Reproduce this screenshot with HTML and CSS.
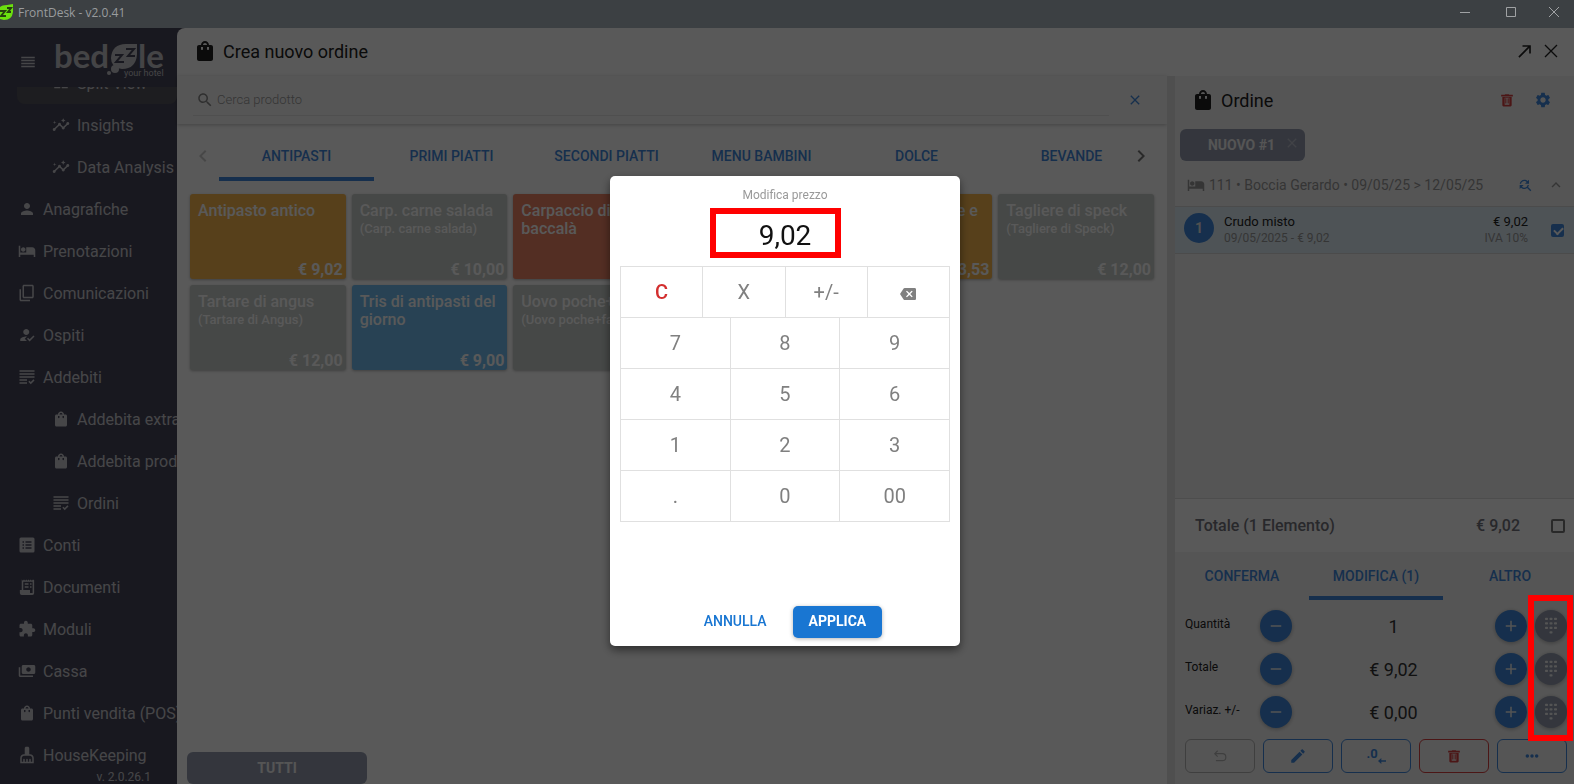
FILE: index.html
```html
<!DOCTYPE html>
<html lang="it">
  <head>
    <meta charset="utf-8">
    <title>FrontDesk</title>
    <link rel="stylesheet" href="styles.css">
  </head>
  <body>
    <!-- icon set -->
    <svg class="sprite" width="0" height="0">
      <symbol id="i-reorder" viewBox="0 0 24 24"><path d="M3 15h18v-2H3v2zm0 4h18v-2H3v2zm0-8h18V9H3v2zm0-6v2h18V5H3z"/></symbol>
      <symbol id="i-insights" viewBox="0 0 24 24"><path d="M21 8c-1.45 0-2.26 1.44-1.93 2.51l-3.55 3.56c-.3-.09-.74-.09-1.04 0l-2.55-2.55C12.27 10.45 11.46 9 10 9c-1.45 0-2.27 1.44-1.93 2.52l-4.56 4.55C2.44 15.74 1 16.55 1 18c0 1.1.9 2 2 2 1.45 0 2.26-1.44 1.93-2.51l4.55-4.56c.3.09.74.09 1.04 0l2.55 2.55C12.73 16.55 13.54 18 15 18c1.45 0 2.27-1.44 1.93-2.52l3.56-3.55C21.56 12.26 23 11.45 23 10c0-1.1-.9-2-2-2zM15 9l.94-2.07L18 6l-2.06-.93L15 3l-.92 2.07L12 6l2.08.93zM3.5 11L4 9l2-.5L4 8l-.5-2L3 8l-2 .5L3 9z"/></symbol>
      <symbol id="i-split" viewBox="0 0 24 24"><path d="M3 5h8v14H3zM13 5h8v5h-8zM13 12h8v7h-8z"/></symbol>
      <symbol id="i-person" viewBox="0 0 24 24"><path d="M12 12c2.21 0 4-1.79 4-4s-1.79-4-4-4-4 1.79-4 4 1.79 4 4 4zm0 2c-2.67 0-8 1.34-8 4v2h16v-2c0-2.66-5.33-4-8-4z"/></symbol>
      <symbol id="i-hotel" viewBox="0 0 24 24"><path d="M7 13c1.66 0 3-1.34 3-3S8.66 7 7 7s-3 1.34-3 3 1.34 3 3 3zm12-6h-8v7H3V5H1v15h2v-3h18v3h2v-9c0-2.21-1.79-4-4-4z"/></symbol>
      <symbol id="i-copy" viewBox="0 0 24 24"><path transform="matrix(1 0 0 -1 0 24)" d="M16 1H4c-1.1 0-2 .9-2 2v14h2V3h12V1zm3 4H8c-1.1 0-2 .9-2 2v14c0 1.1.9 2 2 2h11c1.1 0 2-.9 2-2V7c0-1.1-.9-2-2-2zm0 16H8V7h11v14z"/></symbol>
      <symbol id="i-guest" viewBox="0 0 24 24"><path d="M9 17l3-2.94c-.39-.04-.68-.06-1-.06-2.67 0-8 1.34-8 4v2h9l-3-3zm2-5c2.21 0 4-1.79 4-4s-1.79-4-4-4-4 1.79-4 4 1.79 4 4 4zM15.47 20.5L12 17l1.4-1.41 2.07 2.08 5.13-5.17 1.4 1.41z"/></symbol>
      <symbol id="i-charges" viewBox="0 0 24 24"><path d="M2 3h20v2H2zM2 7h20v2H2zM2 11h20v2H2zM2 15h10v2H2zM2 19h10v2H2zM17 21.500l-3.200-3.200 1.400-1.400 1.800 1.800 3.600-3.600 1.400 1.400z"/></symbol>
      <symbol id="i-bag" viewBox="0 0 24 24"><path d="M18 6h-2c0-2.210-1.790-4-4-4S8 3.790 8 6H6c-1.100 0-2 .9-2 2v12c0 1.100.9 2 2 2h12c1.100 0 2-.9 2-2V8c0-1.100-.9-2-2-2zm-8 4c0 .55-.45 1-1 1s-1-.45-1-1V8h2v2zm2-6c1.100 0 2 .9 2 2h-4c0-1.100.9-2 2-2zm4 6c0 .55-.45 1-1 1s-1-.45-1-1V8h2v2z"/></symbol>
      <symbol id="i-list" viewBox="0 0 24 24"><path fill-rule="evenodd" d="M4 2h16a2 2 0 0 1 2 2v16a2 2 0 0 1-2 2H4a2 2 0 0 1-2-2V4a2 2 0 0 1 2-2zM6 7v2h2V7zM10 7v2h8V7zM6 11v2h2v-2zM10 11v2h8v-2zM6 15v2h2v-2zM10 15v2h8v-2z"/></symbol>
      <symbol id="i-receipt" viewBox="0 0 24 24"><path fill-rule="evenodd" d="M5 2l1.500 1.500L8 2l1.500 1.500L11 2l1.500 1.500L14 2l1.500 1.500L17 2l1.500 1.500L20 2l1.500 1V20a2.500 2.500 0 0 1-2.500 2.500H5A2.500 2.500 0 0 1 2.500 20v-4H5zM7 5v11h9v4h3.500V5zM9 7h5v2H9zM16 7h2v2h-2zM9 11h5v2H9zM16 11h2v2h-2z"/></symbol>
      <symbol id="i-module" viewBox="0 0 24 24"><path d="M20.500 11H19V7c0-1.100-.9-2-2-2h-4V3.500C13 2.120 11.880 1 10.500 1S8 2.120 8 3.500V5H4c-1.100 0-1.990.9-1.990 2v3.800H3.500c1.490 0 2.700 1.210 2.700 2.700s-1.210 2.700-2.700 2.700H2V20c0 1.100.9 2 2 2h3.800v-1.500c0-1.490 1.210-2.700 2.700-2.700 1.490 0 2.700 1.210 2.700 2.700V22H17c1.100 0 2-.9 2-2v-4h1.500c1.380 0 2.500-1.120 2.500-2.500S21.880 11 20.500 11z"/></symbol>
      <symbol id="i-cash" viewBox="0 0 24 24"><path transform="matrix(-1 0 0 1 24 0)" d="M19 14V6c0-1.100-.9-2-2-2H3c-1.100 0-2 .9-2 2v8c0 1.100.9 2 2 2h14c1.100 0 2-.9 2-2zm-9-1c-1.660 0-3-1.340-3-3s1.340-3 3-3 3 1.340 3 3-1.340 3-3 3zm13-6v11c0 1.100-.9 2-2 2H4v-2h17V7h2z"/></symbol>
      <symbol id="i-clean" viewBox="0 0 24 24"><path d="M16 11h-1V3c0-1.100-.9-2-2-2h-2c-1.100 0-2 .9-2 2v8H8c-2.760 0-5 2.240-5 5v7h18v-7c0-2.760-2.240-5-5-5zm3 10h-2v-3c0-.55-.45-1-1-1s-1 .45-1 1v3h-2v-3c0-.55-.45-1-1-1s-1 .45-1 1v3H9v-3c0-.55-.45-1-1-1s-1 .45-1 1v3H5v-5c0-1.650 1.350-3 3-3h8c1.650 0 3 1.350 3 3v5z"/></symbol>
      <symbol id="i-search" viewBox="0 0 24 24"><path d="M15.500 14h-.79l-.28-.27C15.410 12.590 16 11.110 16 9.500 16 5.910 13.090 3 9.500 3S3 5.910 3 9.500 5.910 16 9.500 16c1.610 0 3.090-.59 4.230-1.570l.27.28v.79l5 4.990L20.490 19l-4.990-5zm-6 0C7.010 14 5 11.990 5 9.500S7.010 5 9.500 5 14 7.010 14 9.500 11.990 14 9.500 14z"/></symbol>
      <symbol id="i-close" viewBox="0 0 24 24"><path d="M19 6.410L17.590 5 12 10.590 6.410 5 5 6.410 10.590 12 5 17.590 6.410 19 12 13.410 17.590 19 19 17.590 13.410 12z"/></symbol>
      <symbol id="i-thin-close" viewBox="0 0 24 24"><path d="M3 3l18 18M21 3L3 21" fill="none" stroke="currentColor" stroke-width="2"/></symbol>
      <symbol id="i-popout" viewBox="0 0 24 24"><path d="M9 5v2h6.590L4 18.590 5.410 20 17 8.410V15h2V5z"/></symbol>
      <symbol id="i-trash" viewBox="0 0 24 24"><path fill-rule="evenodd" d="M2 3h6l1-1h6l1 1h6v3H2zM4 7h16v14a2 2 0 0 1-2 2H6a2 2 0 0 1-2-2zM8 8v12h8V8zM9 9h2v9H9zM13 9h2v9h-2z"/></symbol>
      <symbol id="i-gear" viewBox="0 0 24 24"><path d="M19.140 12.940c.04-.3.06-.61.06-.94 0-.32-.02-.64-.07-.94l2.030-1.580c.18-.14.23-.41.12-.61l-1.920-3.320c-.12-.22-.37-.29-.59-.22l-2.390.96c-.5-.38-1.030-.7-1.620-.94l-.36-2.540c-.04-.24-.24-.41-.48-.41h-3.840c-.24 0-.43.17-.47.41l-.36 2.540c-.59.24-1.130.57-1.620.94l-2.390-.96c-.22-.08-.47 0-.59.22L2.740 8.870c-.12.21-.08.47.12.61l2.030 1.580c-.05.3-.09.63-.09.94s.02.64.07.94l-2.030 1.580c-.18.14-.23.41-.12.61l1.920 3.320c.12.22.37.29.59.22l2.390-.96c.5.38 1.030.7 1.620.94l.36 2.540c.05.24.24.41.48.41h3.840c.24 0 .44-.17.47-.41l.36-2.540c.59-.24 1.130-.56 1.620-.94l2.390.96c.22.08.47 0 .59-.22l1.920-3.320c.12-.22.07-.47-.12-.61l-2.010-1.580zM12 15.600c-1.980 0-3.600-1.620-3.600-3.600s1.620-3.600 3.600-3.600 3.600 1.620 3.600 3.600-1.620 3.600-3.600 3.600z"/></symbol>
      <symbol id="i-left" viewBox="0 0 24 24"><path d="M15.410 7.410L14 6l-6 6 6 6 1.410-1.410L10.830 12z"/></symbol>
      <symbol id="i-right" viewBox="0 0 24 24"><path d="M10 6L8.590 7.410 13.170 12l-4.580 4.590L10 18l6-6z"/></symbol>
      <symbol id="i-up" viewBox="0 0 24 24"><path d="M12 8l-6 6 1.410 1.410L12 10.830l4.590 4.580L18 14z"/></symbol>
      <symbol id="i-replace" viewBox="0 0 24 24"><path d="M11 6c1.380 0 2.630.56 3.540 1.460L12 10h6V4l-2.050 2.050C14.680 4.780 12.930 4 11 4c-3.530 0-6.430 2.610-6.920 6H6.100c.46-2.280 2.480-4 4.900-4zm5.640 9.140c.66-.9 1.120-1.970 1.280-3.140H15.900c-.46 2.280-2.480 4-4.900 4-1.380 0-2.630-.56-3.540-1.460L10 12H4v6l2.050-2.050C7.320 17.220 9.070 18 11 18c1.550 0 2.980-.51 4.140-1.360L20 21.490 21.490 20l-4.850-4.860z"/></symbol>
      <symbol id="i-minus" viewBox="0 0 24 24"><path d="M5 11h14v2H5z"/></symbol>
      <symbol id="i-plus" viewBox="0 0 24 24"><path d="M19 13h-6v6h-2v-6H5v-2h6V5h2v6h6z"/></symbol>
      <symbol id="i-dialpad" viewBox="0 0 24 24"><path d="M5 1h2a1 1 0 0 1 1 1v1a1 1 0 0 1-1 1H5a1 1 0 0 1-1-1V2a1 1 0 0 1 1-1zM11 1h2a1 1 0 0 1 1 1v1a1 1 0 0 1-1 1h-2a1 1 0 0 1-1-1V2a1 1 0 0 1 1-1zM17 1h2a1 1 0 0 1 1 1v1a1 1 0 0 1-1 1h-2a1 1 0 0 1-1-1V2a1 1 0 0 1 1-1zM5 7h2a1 1 0 0 1 1 1v1a1 1 0 0 1-1 1H5a1 1 0 0 1-1-1V8a1 1 0 0 1 1-1zM11 7h2a1 1 0 0 1 1 1v1a1 1 0 0 1-1 1h-2a1 1 0 0 1-1-1V8a1 1 0 0 1 1-1zM17 7h2a1 1 0 0 1 1 1v1a1 1 0 0 1-1 1h-2a1 1 0 0 1-1-1V8a1 1 0 0 1 1-1zM5 13h2a1 1 0 0 1 1 1v1a1 1 0 0 1-1 1H5a1 1 0 0 1-1-1v-1a1 1 0 0 1 1-1zM11 13h2a1 1 0 0 1 1 1v1a1 1 0 0 1-1 1h-2a1 1 0 0 1-1-1v-1a1 1 0 0 1 1-1zM17 13h2a1 1 0 0 1 1 1v1a1 1 0 0 1-1 1h-2a1 1 0 0 1-1-1v-1a1 1 0 0 1 1-1zM11 19h2a1 1 0 0 1 1 1v1a1 1 0 0 1-1 1h-2a1 1 0 0 1-1-1v-1a1 1 0 0 1 1-1z"/></symbol>
      <symbol id="i-undo" viewBox="0 0 24 24"><path d="M8 3L3 8l5 5M3 8h13a6 6 0 0 1 0 12H5" fill="none" stroke="currentColor" stroke-width="2"/></symbol>
      <symbol id="i-edit" viewBox="0 0 24 24"><path d="M3 17.250V21h3.750L17.810 9.940l-3.750-3.750L3 17.250zM20.710 7.040c.39-.39.39-1.020 0-1.410l-2.340-2.340c-.39-.39-1.020-.39-1.410 0l-1.830 1.830 3.750 3.750 1.830-1.830z"/></symbol>
      <symbol id="i-arrow" viewBox="0 0 24 24"><path d="M24 10v4H10v7L0 12l10-9v7z"/></symbol>
      <symbol id="i-dots" viewBox="0 0 24 24"><circle cx="4" cy="12" r="3"/><circle cx="12" cy="12" r="3"/><circle cx="20" cy="12" r="3"/></symbol>
      <symbol id="i-backspace" viewBox="0 0 24 24"><path d="M22 3H7c-.69 0-1.230.35-1.590.88L0 12l5.410 8.110c.36.53.9.89 1.590.89h15c1.100 0 2-.9 2-2V5c0-1.100-.9-2-2-2zm-3 12.590L17.590 17 14 13.410 10.410 17 9 15.590 12.590 12 9 8.410 10.410 7 14 10.590 17.590 7 19 8.410 15.410 12 19 15.590z"/></symbol>
    </svg>

    <header class="titlebar">
      <svg class="app-icon" viewBox="0 0 16 18">
        <path d="M0 4Q2 2 7 2L13 1V9Q12 17 4 17L0 16z" fill="#6be00f"/>
        <path d="M0 8h5l-4 5h5M7 5h4l-3 4h3" fill="none" stroke="#26400f" stroke-width="2"/>
      </svg>
      <span class="app-title">FrontDesk - v2.0.41</span>
      <button class="win-button" aria-label="Riduci"><svg viewBox="0 0 10 10"><path d="M0 5.500h10"/></svg></button>
      <button class="win-button" aria-label="Ingrandisci"><svg viewBox="0 0 10 10"><path d="M.5.5h9v9h-9z"/></svg></button>
      <button class="win-button" aria-label="Chiudi"><svg viewBox="0 0 10 10"><path d="M0 0l10 10M10 0L0 10"/></svg></button>
    </header>

    <div class="app">
      <aside class="sidebar">
        <div class="brand">
          <button class="menu-button" aria-label="Menu"><svg class="icon icon-medium"><use href="#i-reorder"/></svg></button>
          <svg class="logo" viewBox="0 0 110 36">
            <text x="-1" y="24" class="logo-word">bed</text>
            <path d="M56 14Q57 0 71 0H82V10Q81 25 67 25Q56 24 56 14z"/>
            <circle cx="60" cy="25" r="4"/>
            <circle cx="54" cy="29" r="2"/>
            <path class="logo-zz" d="M60 11h7l-6 7h8M71 5h8l-6 7h7"/>
            <text x="83" y="24" class="logo-word">le</text>
            <text x="69" y="32" class="logo-sub">your hotel</text>
          </svg>
        </div>
        <nav class="nav">
          <a href="#" class="nav-item sub current"><svg class="icon icon-medium"><use href="#i-split"/></svg>Split View</a>
          <a href="#" class="nav-item sub"><svg class="icon icon-medium"><use href="#i-insights"/></svg>Insights</a>
          <a href="#" class="nav-item sub"><svg class="icon icon-medium"><use href="#i-insights"/></svg>Data Analysis</a>
          <a href="#" class="nav-item"><svg class="icon icon-medium"><use href="#i-person"/></svg>Anagrafiche</a>
          <a href="#" class="nav-item"><svg class="icon icon-medium"><use href="#i-hotel"/></svg>Prenotazioni</a>
          <a href="#" class="nav-item"><svg class="icon icon-medium"><use href="#i-copy"/></svg>Comunicazioni</a>
          <a href="#" class="nav-item"><svg class="icon icon-medium"><use href="#i-guest"/></svg>Ospiti</a>
          <a href="#" class="nav-item"><svg class="icon icon-medium"><use href="#i-charges"/></svg>Addebiti</a>
          <a href="#" class="nav-item sub"><svg class="icon icon-medium"><use href="#i-bag"/></svg>Addebita extra</a>
          <a href="#" class="nav-item sub"><svg class="icon icon-medium"><use href="#i-bag"/></svg>Addebita prodotti</a>
          <a href="#" class="nav-item sub"><svg class="icon icon-medium"><use href="#i-charges"/></svg>Ordini</a>
          <a href="#" class="nav-item"><svg class="icon icon-medium"><use href="#i-list"/></svg>Conti</a>
          <a href="#" class="nav-item"><svg class="icon icon-medium"><use href="#i-receipt"/></svg>Documenti</a>
          <a href="#" class="nav-item"><svg class="icon icon-medium"><use href="#i-module"/></svg>Moduli</a>
          <a href="#" class="nav-item"><svg class="icon icon-medium"><use href="#i-cash"/></svg>Cassa</a>
          <a href="#" class="nav-item"><svg class="icon icon-medium"><use href="#i-bag"/></svg>Punti vendita (POS)</a>
          <a href="#" class="nav-item"><svg class="icon icon-medium"><use href="#i-clean"/></svg>HouseKeeping</a>
        </nav>
        <span class="version">v. 2.0.26.1</span>
      </aside>

      <main class="window">
        <div class="window-header">
          <svg class="icon icon-large"><use href="#i-bag"/></svg>
          <h1>Crea nuovo ordine</h1>
          <button class="icon-button" aria-label="Apri"><svg class="icon icon-big"><use href="#i-popout"/></svg></button>
          <button class="icon-button" aria-label="Chiudi"><svg class="icon"><use href="#i-thin-close"/></svg></button>
        </div>

        <div class="columns">
          <section class="catalog">
            <div class="search-bar">
              <label class="search">
                <svg class="icon icon-medium"><use href="#i-search"/></svg>
                <input type="text" placeholder="Cerca prodotto" aria-label="Cerca prodotto">
              </label>
              <button class="icon-button blue clear" aria-label="Pulisci"><svg class="icon"><use href="#i-close"/></svg></button>
            </div>

            <div class="category-bar">
              <button class="arrow-button faded" aria-label="Precedente"><svg class="icon icon-large"><use href="#i-left"/></svg></button>
              <div class="categories">
                <button class="tab active">ANTIPASTI</button>
                <button class="tab">PRIMI PIATTI</button>
                <button class="tab">SECONDI PIATTI</button>
                <button class="tab">MENU BAMBINI</button>
                <button class="tab">DOLCE</button>
                <button class="tab">BEVANDE</button>
              </div>
              <button class="arrow-button" aria-label="Successivo"><svg class="icon icon-large"><use href="#i-right"/></svg></button>
            </div>

            <div class="products">
              <button class="product orange"><span class="name">Antipasto antico</span><span class="price">€ 9,02</span></button>
              <button class="product"><span class="name">Carp. carne salada</span><span class="detail">(Carp. carne salada)</span><span class="price">€ 10,00</span></button>
              <button class="product red"><span class="name">Carpaccio di baccalà</span></button>
              <button class="product orange fifth"><span class="name">Insalata di pesce e</span><span class="price">€ 13,53</span></button>
              <button class="product"><span class="name">Tagliere di speck</span><span class="detail">(Tagliere di Speck)</span><span class="price">€ 12,00</span></button>
              <button class="product"><span class="name">Tartare di angus</span><span class="detail">(Tartare di Angus)</span><span class="price">€ 12,00</span></button>
              <button class="product azure"><span class="name">Tris di antipasti del giorno</span><span class="price">€ 9,00</span></button>
              <button class="product"><span class="name">Uovo poche+fave</span><span class="detail">(Uovo poche+fave)</span></button>
            </div>

            <button class="gray-button all-button">TUTTI</button>
          </section>

          <section class="order">
            <div class="order-header">
              <svg class="icon icon-large"><use href="#i-bag"/></svg>
              <h2>Ordine</h2>
              <button class="icon-button red-text" aria-label="Elimina ordine"><svg class="icon icon-small"><use href="#i-trash"/></svg></button>
              <button class="icon-button blue" aria-label="Impostazioni"><svg class="icon icon-medium"><use href="#i-gear"/></svg></button>
            </div>

            <button class="gray-button order-tab">NUOVO #1 <svg class="icon"><use href="#i-close"/></svg></button>

            <div class="booking">
              <svg class="icon icon-medium"><use href="#i-hotel"/></svg>
              <span class="booking-text">111 • Boccia Gerardo • 09/05/25 &gt; 12/05/25</span>
              <button class="icon-button blue" aria-label="Cambia"><svg class="icon"><use href="#i-replace"/></svg></button>
              <button class="icon-button" aria-label="Comprimi"><svg class="icon icon-medium"><use href="#i-up"/></svg></button>
            </div>

            <div class="order-item">
              <span class="count">1</span>
              <div class="item-info">
                <div>Crudo misto</div>
                <div class="muted">09/05/2025 - € 9,02</div>
              </div>
              <div class="item-info item-price">
                <div>€ 9,02</div>
                <div class="muted">IVA 10%</div>
              </div>
              <input type="checkbox" class="check" checked aria-label="Seleziona Crudo misto">
            </div>

            <div class="total">
              <span class="total-label">Totale (1 Elemento)</span>
              <span>€ 9,02</span>
              <input type="checkbox" class="check" aria-label="Seleziona tutto">
            </div>

            <div class="order-tabs">
              <button class="tab">CONFERMA</button>
              <button class="tab active">MODIFICA (1)</button>
              <button class="tab">ALTRO</button>
            </div>

            <div class="editor">
              <div class="edit-row">
                <span class="edit-label">Quantità</span>
                <button class="round" aria-label="Diminuisci"><svg class="icon icon-medium"><use href="#i-minus"/></svg></button>
                <span class="edit-value">1</span>
                <button class="round" aria-label="Aumenta"><svg class="icon icon-medium"><use href="#i-plus"/></svg></button>
                <button class="round pad" aria-label="Tastierino"><svg class="icon icon-medium"><use href="#i-dialpad"/></svg></button>
              </div>
              <div class="edit-row">
                <span class="edit-label">Totale</span>
                <button class="round" aria-label="Diminuisci"><svg class="icon icon-medium"><use href="#i-minus"/></svg></button>
                <span class="edit-value">€ 9,02</span>
                <button class="round" aria-label="Aumenta"><svg class="icon icon-medium"><use href="#i-plus"/></svg></button>
                <button class="round pad" aria-label="Tastierino"><svg class="icon icon-medium"><use href="#i-dialpad"/></svg></button>
              </div>
              <div class="edit-row">
                <span class="edit-label">Variaz. +/-</span>
                <button class="round" aria-label="Diminuisci"><svg class="icon icon-medium"><use href="#i-minus"/></svg></button>
                <span class="edit-value">€ 0,00</span>
                <button class="round" aria-label="Aumenta"><svg class="icon icon-medium"><use href="#i-plus"/></svg></button>
                <button class="round pad" aria-label="Tastierino"><svg class="icon icon-medium"><use href="#i-dialpad"/></svg></button>
              </div>
            </div>

            <div class="actions">
              <button class="action disabled" aria-label="Annulla"><svg class="icon icon-small"><use href="#i-undo"/></svg></button>
              <button class="action" aria-label="Modifica"><svg class="icon icon-medium"><use href="#i-edit"/></svg></button>
              <button class="action decimals" aria-label="Arrotonda">.0<svg class="icon"><use href="#i-arrow"/></svg></button>
              <button class="action danger" aria-label="Elimina"><svg class="icon icon-small"><use href="#i-trash"/></svg></button>
              <button class="action" aria-label="Altro"><svg class="icon icon-small"><use href="#i-dots"/></svg></button>
            </div>
          </section>
        </div>
      </main>
    </div>

    <div class="overlay">
      <div class="dialog" role="dialog" aria-labelledby="dialog-title">
        <label class="dialog-title" id="dialog-title" for="amount">Modifica prezzo</label>
        <input type="text" class="amount" id="amount" value="9,02">
        <span class="highlight highlight-amount"></span>
        <div class="keypad">
          <button class="key red-key">C</button>
          <button class="key">X</button>
          <button class="key">+/-</button>
          <button class="key" aria-label="Cancella"><svg class="icon"><use href="#i-backspace"/></svg></button>
          <button class="key wide">7</button>
          <button class="key wide">8</button>
          <button class="key wide">9</button>
          <button class="key wide">4</button>
          <button class="key wide">5</button>
          <button class="key wide">6</button>
          <button class="key wide">1</button>
          <button class="key wide">2</button>
          <button class="key wide">3</button>
          <button class="key wide">.</button>
          <button class="key wide">0</button>
          <button class="key wide">00</button>
        </div>
        <div class="dialog-buttons">
          <button class="text-button">ANNULLA</button>
          <button class="apply-button">APPLICA</button>
        </div>
      </div>
    </div>
    <span class="highlight highlight-pads"></span>
  </body>
</html>
```
FILE: styles.css
```css
* {
  box-sizing: border-box;
}

body {
  margin: 0;
  height: 100vh;
  display: flex;
  flex-direction: column;
  overflow: hidden;
  background-color: #47475b;
  font-family: Roboto, Arial, sans-serif;
  color: #222;
}

button {
  font-family: inherit;
  color: inherit;
  background: none;
  border: none;
  padding: 0;
  cursor: pointer;
}

h1, h2 {
  margin: 0;
  font-size: 18px;
  font-weight: 400;
}

.sprite {
  position: absolute;
}

.icon {
  width: 16px;
  height: 16px;
  fill: currentColor;
  flex-shrink: 0;
}

.icon-small {
  width: 14px;
  height: 14px;
}

.icon-medium {
  width: 18px;
  height: 18px;
}

.icon-big {
  width: 20px;
  height: 20px;
}

.icon-large {
  width: 24px;
  height: 24px;
}

/* Title bar */
.titlebar {
  display: flex;
  align-items: center;
  height: 28px;
  flex-shrink: 0;
  padding: 0 0 4px;
  background-color: #3c4043;
  color: #999c9e;
}

.app-icon {
  width: 16px;
  height: 18px;
  margin-right: 2px;
}

.app-title {
  flex: 1;
  font-family: "Open Sans", sans-serif;
  font-size: 12px;
}

.win-button {
  width: 46px;
  height: 24px;
}

.win-button:last-child {
  width: 40px;
}

.win-button svg {
  width: 10px;
  height: 10px;
  fill: none;
  stroke: #a0a2a4;
}

.app {
  flex: 1;
  display: flex;
  min-height: 0;
}

/* Sidebar */
.sidebar {
  position: relative;
  width: 177px;
  flex-shrink: 0;
  display: flex;
  flex-direction: column;
  overflow: hidden;
  color: #c9c9cf;
}

.brand {
  display: flex;
  height: 59px;
  flex-shrink: 0;
  padding: 16px 0 0 19px;
}

.menu-button {
  width: 18px;
  height: 38px;
  margin-right: 18px;
}

.logo {
  width: 110px;
  height: 36px;
  fill: #c4c4c8;
  overflow: visible;
}

.logo-word {
  font-family: Lato, sans-serif;
  font-size: 33px;
  font-weight: 700;
}

.logo-sub {
  font-size: 9px;
}

.logo-zz {
  fill: none;
  stroke: #47475b;
  stroke-width: 2;
}

.nav {
  flex: 1;
  min-height: 0;
  overflow: hidden;
}

.nav-item {
  display: flex;
  align-items: center;
  gap: 7px;
  height: 42px;
  padding-left: 18px;
  font-size: 16px;
  white-space: nowrap;
  color: inherit;
  text-decoration: none;
}

.nav-item.sub {
  padding-left: 52px;
}

.nav-item.current {
  margin: -25px 0 0 17px;
  padding-left: 35px;
  border-radius: 8px;
  background-color: #54545c;
}

.version {
  position: absolute;
  right: 26px;
  bottom: 0;
  font-size: 12px;
}

/* Order window */
.window {
  flex: 1;
  min-width: 0;
  display: flex;
  flex-direction: column;
  background-color: #fff;
  border-radius: 8px 0 0 0;
}

.window-header {
  display: flex;
  align-items: center;
  gap: 6px;
  height: 48px;
  flex-shrink: 0;
  padding: 0 13px 2px 16px;
}

.window-header h1, .order-header h2 {
  flex: 1;
}

.icon-button {
  display: flex;
  align-items: center;
  justify-content: center;
  width: 20px;
  height: 20px;
}

.blue {
  color: #3f88dc;
}

.red-text {
  color: #d84040;
}

.columns {
  flex: 1;
  display: flex;
  min-height: 0;
}

.catalog {
  flex: 1;
  min-width: 0;
  display: flex;
  flex-direction: column;
  background-color: #fff;
}

.search-bar {
  display: flex;
  align-items: center;
  height: 48px;
  flex-shrink: 0;
  padding: 0 22px 0 16px;
  background-color: #f6f6f6;
  box-shadow: 0 1px 4px rgba(0, 0, 0, 0.25);
}

.search {
  flex: 1;
  display: flex;
  align-items: center;
  gap: 3px;
  height: 32px;
  padding-left: 3px;
  border-bottom: 1px solid #e2e2e2;
  color: #888;
}

.search input {
  flex: 1;
  padding: 0;
  border: none;
  background: none;
  font-family: inherit;
  font-size: 13px;
  font-weight: 300;
}

.search input::placeholder {
  color: #999;
}

.clear {
  margin-left: 16px;
}

.category-bar {
  display: flex;
  height: 57px;
  flex-shrink: 0;
  padding: 0 12px 0 13px;
}

.categories {
  flex: 1;
  display: flex;
  overflow: hidden;
}

.arrow-button {
  width: 29px;
  padding: 10px 3px 0 0;
  color: #777;
}

.arrow-button:last-child {
  padding: 10px 0 0;
}

.faded {
  color: #ccc;
}

.tab {
  padding-top: 3px;
  border-bottom: 4px solid transparent;
  font-size: 14px;
  font-weight: 500;
  color: #3f88dc;
}

.categories .tab {
  width: 155px;
  flex-shrink: 0;
  padding-top: 11px;
}

.tab.active {
  border-bottom-color: #3f88dc;
}

.products {
  display: grid;
  grid-template-columns: repeat(6, 1fr);
  grid-auto-rows: 85px;
  gap: 6px;
  padding: 13px 13px 0 13px;
}

.product {
  display: flex;
  flex-direction: column;
  padding: 8px 3px 0 8px;
  border-radius: 3px;
  background-color: #c8ceca;
  box-shadow: 0 1px 3px rgba(0, 0, 0, 0.3);
  color: #fff;
  text-align: left;
  line-height: 18px;
}

.product .name {
  font-size: 16px;
  font-weight: 500;
}

.product .detail {
  font-size: 13px;
  font-weight: 500;
}

.product .price {
  margin-top: auto;
  font-size: 16px;
  font-weight: 700;
  text-align: right;
}

.orange {
  background-color: #f9b74f;
}

.red {
  background-color: #ee8466;
}

.azure {
  background-color: #72bef0;
}

.fifth {
  grid-column: 5;
}

.gray-button {
  height: 32px;
  border-radius: 6px;
  background-color: #949cb0;
  color: #f4f4f4;
  font-size: 14px;
  font-weight: 700;
}

.all-button {
  width: 180px;
  flex-shrink: 0;
  margin: auto 0 0 10px;
}

/* Order column */
.order {
  width: 407px;
  flex-shrink: 0;
  display: flex;
  flex-direction: column;
  border-left: 8px solid #e3e3e3;
  background-color: #f4f4f4;
}

.order-header {
  display: flex;
  align-items: center;
  gap: 6px;
  height: 48px;
  padding: 0 21px 0 16px;
}

.order-header .icon-button + .icon-button {
  margin-left: 10px;
}

.order-tab {
  display: flex;
  align-items: center;
  justify-content: flex-end;
  gap: 9px;
  width: 125px;
  margin: 5px 0 0 5px;
  padding-right: 5px;
  white-space: nowrap;
}

.order-tab .icon {
  margin-bottom: 4px;
  color: #b9bdc8;
}

.booking {
  display: flex;
  align-items: center;
  gap: 4px;
  height: 46px;
  padding: 2px 8px 0 12px;
  border-bottom: 1px solid #d6d6d6;
  color: #999;
}

.booking-text {
  flex: 1;
  font-size: 14px;
}

.booking .icon-button + .icon-button {
  margin-left: 7px;
}

.order-item {
  display: flex;
  align-items: center;
  height: 47px;
  padding: 0 10px 0 9px;
  border-bottom: 1px solid #d6d6d6;
  background-color: #e0eef7;
}

.count {
  width: 30px;
  height: 30px;
  margin: 0 10px 4px 0;
  border-radius: 50%;
  background-color: #3f88dc;
  color: #e4e4e4;
  font-size: 14px;
  font-weight: 700;
  line-height: 30px;
  text-align: center;
}

.item-info {
  flex: 1;
  font-size: 13px;
  line-height: 16px;
}

.item-price {
  flex: 0 0 60px;
  margin-right: 23px;
  text-align: right;
}

.muted {
  font-size: 12px;
  color: #999;
}

.check {
  appearance: none;
  width: 14px;
  height: 14px;
  margin: 0;
  border: 2px solid #777;
  border-radius: 2px;
}

.check:checked {
  width: 13px;
  height: 13px;
  border: none;
  background-color: #3f88dc;
}

.check:checked::after {
  content: "";
  display: block;
  width: 7px;
  height: 4px;
  margin: 3px;
  border: solid #fff;
  border-width: 0 0 2px 2px;
  transform: rotate(-45deg);
}

.total {
  display: flex;
  align-items: center;
  gap: 31px;
  height: 54px;
  margin-top: auto;
  padding: 0 9px 0 20px;
  border-top: 1px solid #dcdcdc;
  background-color: #fff;
  color: #74747c;
  font-size: 16px;
  font-weight: 500;
}

.total-label {
  flex: 1;
}

.order-tabs {
  display: grid;
  grid-template-columns: repeat(3, 134px);
  height: 48px;
}

.editor {
  display: flex;
  flex-direction: column;
  gap: 11px;
  padding: 10px 7px 0 10px;
}

.edit-row {
  display: flex;
  align-items: center;
}

.edit-label {
  width: 75px;
  padding-bottom: 4px;
  font-size: 12px;
}

.edit-value {
  flex: 1;
  color: #333;
  font-size: 18px;
  text-align: center;
}

.round {
  display: flex;
  align-items: center;
  justify-content: center;
  width: 32px;
  height: 32px;
  border-radius: 50%;
  background-color: #3f88dc;
  box-shadow: 0 1px 4px rgba(0, 0, 0, 0.3);
  color: #f0f0f0;
}

.round.pad {
  margin-left: 8px;
  background-color: #949cb0;
}

.actions {
  display: grid;
  grid-template-columns: repeat(5, 1fr);
  gap: 8px;
  padding: 11px 7px 11px 10px;
}

.action {
  display: flex;
  align-items: center;
  justify-content: center;
  height: 34px;
  border: 1px solid #3f88dc;
  border-radius: 6px;
  color: #3f88dc;
}

.action.disabled {
  border-color: #b4b4b4;
  color: #b4b4b4;
}

.action.danger {
  border-color: #d84040;
  color: #d84040;
}

.decimals {
  align-items: flex-start;
  padding-top: 6px;
  font-size: 13px;
  font-weight: 700;
}

.decimals .icon {
  width: 8px;
  height: 8px;
  margin-top: 11px;
}

/* Dialog */
.overlay {
  position: fixed;
  inset: 28px 0 0 0;
  display: flex;
  align-items: center;
  justify-content: center;
  padding: 10px 4px 0 0;
  background-color: rgba(0, 0, 0, 0.65);
}

.dialog {
  position: relative;
  display: flex;
  flex-direction: column;
  width: 350px;
  height: 470px;
  padding: 12px 10px 8px;
  border-radius: 5px;
  background-color: #fff;
  box-shadow: 0 4px 10px rgba(0, 0, 0, 0.5);
}

.dialog-title {
  font-size: 12px;
  line-height: 14px;
  text-align: center;
  color: #999;
}

.amount {
  width: 100%;
  height: 46px;
  margin: 10px 0 8px;
  padding: 0;
  border: none;
  font-family: inherit;
  font-size: 28px;
  text-align: center;
  color: #111;
}

.keypad {
  display: grid;
  grid-template-columns: repeat(12, 1fr);
  grid-auto-rows: 51px;
  border: solid #e0e0e0;
  border-width: 1px 0 0 1px;
}

.key {
  grid-column: span 3;
  border: solid #e0e0e0;
  border-width: 0 1px 1px 0;
  font-size: 20px;
  color: #808080;
}

.key .icon {
  vertical-align: middle;
}

.key.wide {
  grid-column: span 4;
}

.red-key {
  color: #d32f2f;
  font-weight: 500;
}

.dialog-buttons {
  display: flex;
  justify-content: center;
  gap: 10px;
  margin-top: auto;
}

.text-button, .apply-button {
  height: 32px;
  padding: 0 16px 2px;
  border-radius: 5px;
  font-size: 14px;
  font-weight: 500;
  color: #1976d2;
}

.apply-button {
  background-color: #1976d2;
  box-shadow: 0 1px 4px rgba(0, 0, 0, 0.3);
  color: #fff;
  font-weight: 700;
}

/* Red marks drawn over the controls */
.highlight {
  position: absolute;
  border: 6px solid #f00;
}

.highlight-amount {
  top: 32px;
  left: 100px;
  width: 131px;
  height: 50px;
}

.highlight-pads {
  right: 1px;
  bottom: 43px;
  width: 45px;
  height: 146px;
}
```
